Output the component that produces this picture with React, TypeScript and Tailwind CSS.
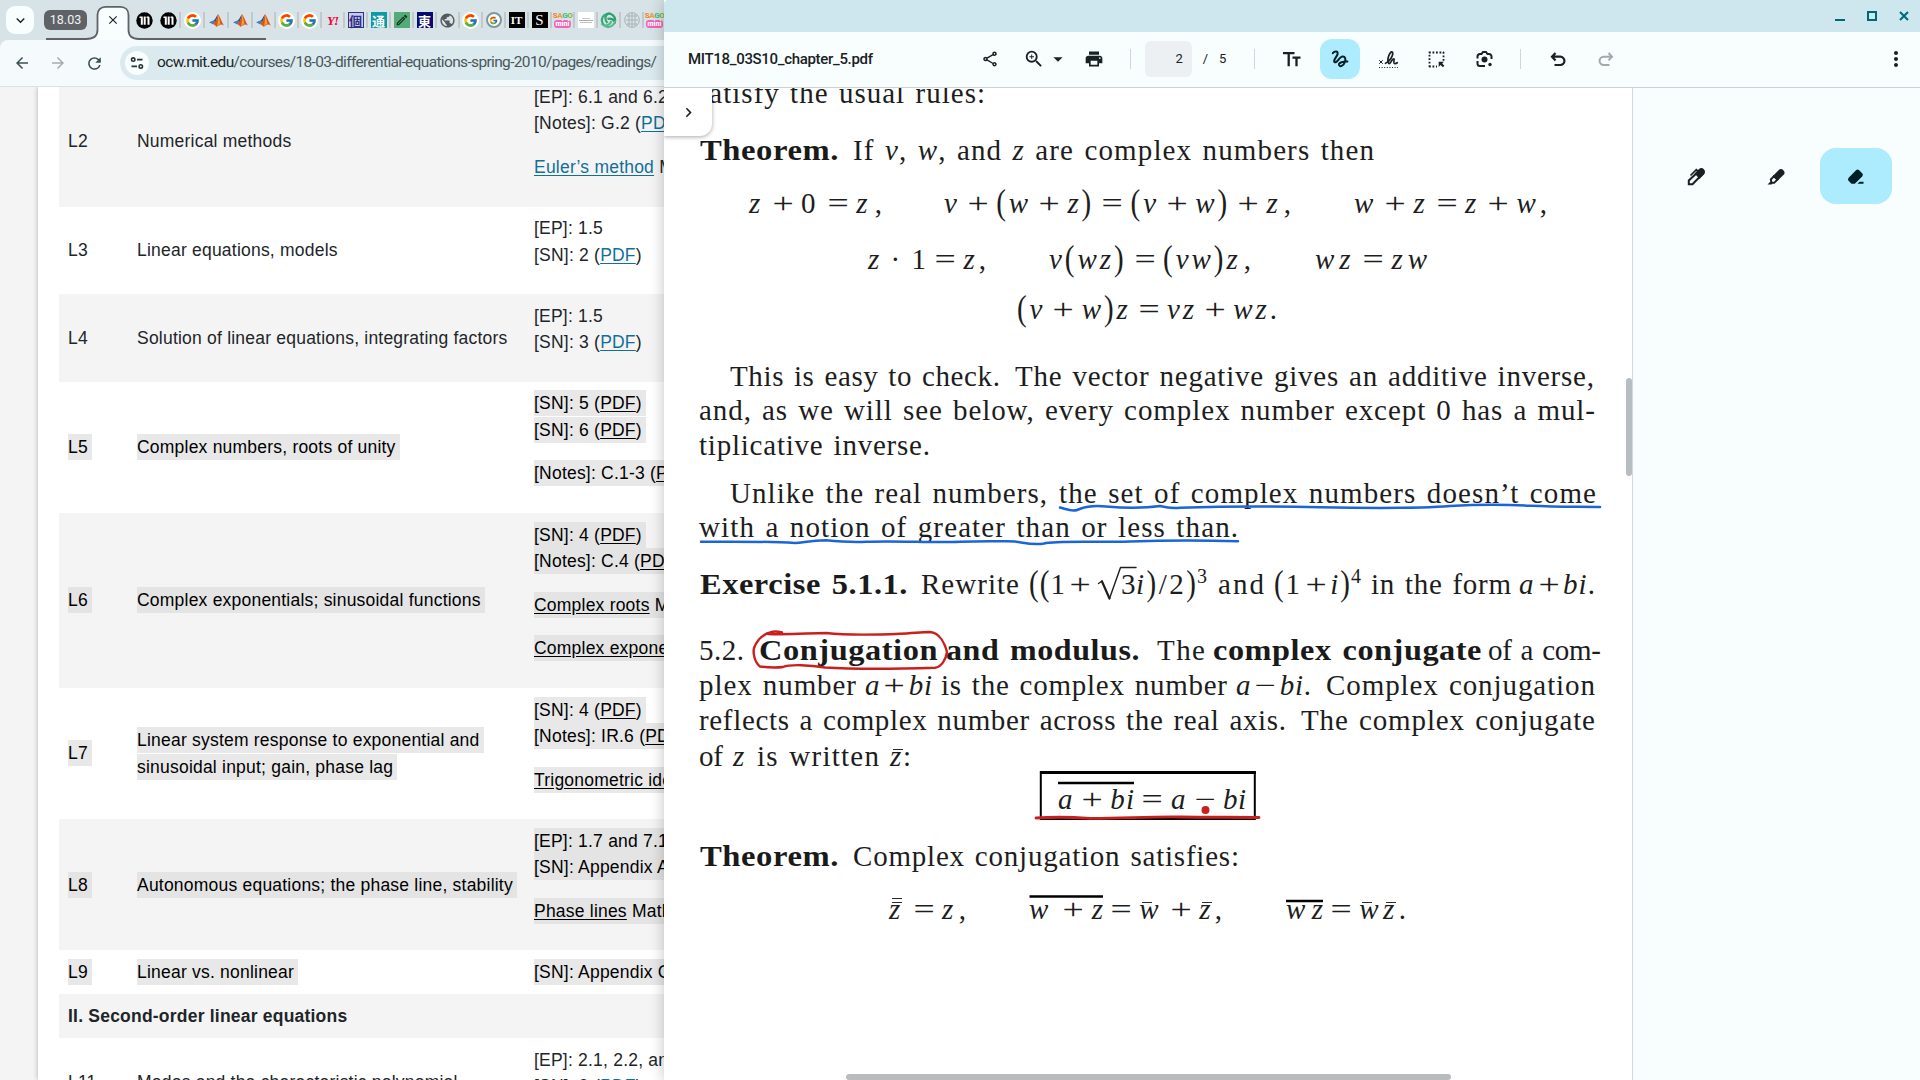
import React, { useLayoutEffect, useRef, type ReactNode } from 'react';
import {
  MdArrowBack,
  MdArrowDropDown,
  MdArrowForward,
  MdClose,
  MdKeyboardArrowDown,
  MdMoreVert,
  MdOutlineShare,
  MdPrint,
  MdPublic,
  MdRefresh,
  MdZoomIn,
  MdChevronRight,
  MdOutlineEdit,
} from 'react-icons/md';
import { FcGoogle } from 'react-icons/fc';

/* ---------- text that spreads its letters over a given width ---------- */

function Fit({
  w,
  stretch = false,
  className = '',
  children,
}: {
  w: number;
  stretch?: boolean;
  className?: string;
  children: ReactNode;
}) {
  const ref = useRef<HTMLSpanElement>(null);
  useLayoutEffect(() => {
    const el = ref.current;
    if (!el) return;
    const fit = () => {
      el.style.transform = 'none';
      if (stretch) {
        el.style.letterSpacing = '0.5px';
        el.style.transformOrigin = '0 0';
        el.style.transform = `scaleX(${w / el.getBoundingClientRect().width})`;
        return;
      }
      el.style.letterSpacing = '0px';
      const natural = el.getBoundingClientRect().width;
      el.style.letterSpacing = '1px';
      const slots = el.getBoundingClientRect().width - natural;
      el.style.letterSpacing = `${(w - natural) / Math.max(1, slots - 1)}px`;
    };
    fit();
    document.fonts?.ready.then(fit);
  }, [w, stretch]);
  return (
    <span ref={ref} className={`inline-block shrink-0 whitespace-pre ${className}`}>
      {children}
    </span>
  );
}

/* ---------- browser window ---------- */

function Google() {
  return (
    <span className="flex size-[17px] items-center justify-center rounded-full bg-white">
      <FcGoogle size={15} />
    </span>
  );
}

function MitMark() {
  return (
    <svg width="17" height="17" viewBox="0 0 17 17">
      <circle cx="8.5" cy="8.5" r="8.2" fill="#000" />
      <path d="M3.500 4.500h3.300v8.300H4.800V6H3.500ZM7.700 4.500h2v8.300h-2ZM10.600 4.500h1.700c.8 0 1.200.5 1.200 1.200v7.100h-2V6h-.9Z" fill="#fff" />
    </svg>
  );
}

function Matlab() {
  return (
    <svg width="17" height="17" viewBox="0 0 17 17">
      <path d="M1 10.2 5.4 8.4 7.6 10.3 4.8 12.2Z" fill="#3d7fc0" />
      <path d="M5.4 8.4C7 8 8 5 10 2.2 8.8 6 8.7 8.5 7.6 10.3Z" fill="#29557d" />
      <path d="M10 2C8.8 6 8.6 9 4.8 12.2 7 11.6 7.6 15 9.2 14.6 11 14 12 11 15.8 13.4 13.5 9 11.5 4 10 2Z" fill="#d9541e" />
      <path d="M10 2C10.4 6 9.6 11 9.2 14.6 11 14 11.2 12 12.4 11.6 11.6 8 10.8 4 10 2Z" fill="#f0a23a" />
    </svg>
  );
}

function Kanji({ ch, cls }: { ch: string; cls: string }) {
  return (
    <span
      className={`flex size-4 items-center justify-center font-['Noto_Sans_CJK_JP',sans-serif] text-[13px] leading-none font-bold ${cls}`}
    >
      {ch}
    </span>
  );
}

function Sago() {
  return (
    <span className="flex h-4 w-[17px] flex-col items-center font-['Roboto',sans-serif] text-[8px] leading-none font-black">
      <span className="flex h-2 tracking-[-0.5px]">
        <span className="text-[#f08a3c]">S</span>
        <span className="text-[#f0a03c]">A</span>
        <span className="text-[#4dbb9a]">G</span>
        <span className="text-[#7cc043]">O</span>
      </span>
      <span className="flex h-2 w-[17px] items-center justify-center rounded-[3px] bg-[#f565b5] text-[7px] text-white">mini</span>
    </span>
  );
}

function Swirl() {
  return (
    <svg width="17" height="17" viewBox="0 0 17 17" fill="none" strokeWidth="2.2">
      <path d="M4.500 13.500C0 10 1.500 3 7.500 2 4.500 5 4.800 8 7.500 11" stroke="#3aa878" />
      <path d="M6 2.200C11 .200 16 4 15 9.500 13 7 10 6 7.500 7" stroke="#2f9f6f" />
      <path d="M15 8.500C14.500 14 8.500 17 4 13.500 8 13.800 10.500 12 11.300 9" stroke="#56b98d" />
    </svg>
  );
}

function GreySeal() {
  return (
    <svg width="16" height="16" viewBox="0 0 16 16" fill="none" stroke="#a9b2b4">
      <circle cx="8" cy="8" r="7.3" />
      <path d="M8 1v14M3 4h10M2 8h12M3 12h10M5 2v12M11 2v12" />
    </svg>
  );
}

const favicons: { gap: string; icon: ReactNode }[] = [
  { gap: 'w-6', icon: <MitMark /> },
  { gap: 'w-6', icon: <MitMark /> },
  { gap: 'w-6', icon: <Google /> },
  { gap: 'w-6', icon: <Matlab /> },
  { gap: 'w-6', icon: <Matlab /> },
  { gap: 'w-[23px]', icon: <Matlab /> },
  { gap: 'w-[23px]', icon: <Google /> },
  { gap: 'w-[23px]', icon: <Google /> },
  {
    gap: 'w-[23px]',
    icon: <span className="font-['Liberation_Serif',serif] text-[13px] leading-none font-bold tracking-[-1px] text-[#f5003c] italic">Y!</span>,
  },
  { gap: 'w-[23px]', icon: <Kanji ch="個" cls="border border-[#2f2f86] bg-[#c9cbe6] text-[#2f2f86]" /> },
  { gap: 'w-[23px]', icon: <Kanji ch="通" cls="bg-[#0b9aa6] text-white" /> },
  {
    gap: 'w-[23px]',
    icon: (
      <span className="flex size-4 items-center justify-center bg-[#55ab78] text-[#16351f]">
        <MdOutlineEdit size={14} />
      </span>
    ),
  },
  { gap: 'w-[23px]', icon: <Kanji ch="東" cls="bg-[#0a0a6e] text-white" /> },
  { gap: 'w-[23px]', icon: <MdPublic size={17} className="text-[#54595c]" /> },
  { gap: 'w-[23px]', icon: <Google /> },
  {
    gap: 'w-[23px]',
    icon: (
      <span className="flex size-4 items-center justify-center rounded-full border-2 border-[#7f979e] bg-white">
        <FcGoogle size={9} />
      </span>
    ),
  },
  {
    gap: 'w-[23px]',
    icon: (
      <span className="flex size-4 items-center justify-center bg-black font-['Liberation_Serif',serif] text-[11px] leading-none font-bold text-white">IT</span>
    ),
  },
  {
    gap: 'w-[23px]',
    icon: (
      <span className="flex size-4 items-center justify-center bg-black font-['Liberation_Serif',serif] text-[15px] leading-none text-white">S</span>
    ),
  },
  { gap: 'w-[23px]', icon: <Sago /> },
  {
    gap: 'w-[23px]',
    icon: (
      <span className="flex size-4 flex-col items-center justify-center gap-px bg-white">
        <span className="h-px w-2 bg-[#c8c8c8]" />
        <span className="h-px w-3.5 bg-[#aaaaaa]" />
        <span className="h-px w-3 bg-[#c0c0c0]" />
      </span>
    ),
  },
  { gap: 'w-[23px]', icon: <Swirl /> },
  { gap: 'w-[23px]', icon: <GreySeal /> },
  { gap: 'w-[23px]', icon: <Sago /> },
];

function TabStrip() {
  return (
    <div className="relative flex h-10 shrink-0 items-start bg-[#d7e3e6]">
      <button className="mt-1.5 ml-1.5 flex size-7 shrink-0 items-center justify-center rounded-[9px] bg-[#f8fdfe] text-[#1b2325]">
        <MdKeyboardArrowDown size={17} />
      </button>
      <div className="mt-2.5 ml-2.5 flex h-5 w-[43px] shrink-0 items-center justify-center rounded-[6px] bg-[#5f6368] font-['Roboto',sans-serif] text-[12.5px] text-[#f1f4f5]">
        18.03
      </div>
      <svg className="absolute top-0 left-0" width="280" height="40" viewBox="0 0 280 40">
        <path d="M88 40c6-1 9.500-4 9.500-9V15c0-5 3-8 8-8h15c5 0 8 3 8 8v16c0 5 3 8 9 9Z" fill="#f8fdfe" />
        <path
          d="M46 39H86c8 0 11.500-3 11.500-9V15c0-5 3-8.200 8-8.200h15c5 0 8 3.200 8 8.200v15c0 6 3.500 9 10.500 9H266"
          fill="none"
          stroke="#5f6368"
          strokeWidth="1.800"
        />
      </svg>
      <div className="relative mt-3 ml-[18px] flex size-4 shrink-0 items-center justify-center text-[#1b2325]">
        <MdClose size={14} />
      </div>
      <div className="mt-2 ml-[11px] flex h-6 shrink-0 items-center">
        {favicons.map((f, i) => (
          <div key={i} className={`relative flex h-4 shrink-0 items-center justify-center ${f.gap}`}>
            {f.icon}
            {i > 0 && <span className="absolute top-0 -right-px h-4 w-0.5 bg-[#c3c9cb]" />}
          </div>
        ))}
      </div>
    </div>
  );
}

function BrowserToolbar() {
  return (
    <div className="shrink-0 bg-[#d7e3e6]">
      <div className="flex h-[47px] items-center overflow-hidden rounded-tl-lg border-b border-[#d6e3e8] bg-[#f5fbfd] text-[#3c4f54]">
        <MdArrowBack size={18} className="ml-[13px] shrink-0" />
        <MdArrowForward size={18} className="ml-[18px] shrink-0 text-[#a3adb0]" />
        <MdRefresh size={19} className="ml-[18px] shrink-0" />
        <div className="ml-4 flex h-[34px] w-[560px] shrink-0 items-center rounded-l-full bg-[#dbeaef] pl-[5px]">
          <span className="flex size-6 shrink-0 items-center justify-center rounded-full bg-[#f8fdfe]">
            <svg width="14" height="14" viewBox="0 0 14 14" fill="none" stroke="#2a3436" strokeWidth="1.600">
              <circle cx="3.200" cy="3.600" r="1.700" />
              <path d="M7 3.600h5.500M1.500 10.400H7" />
              <circle cx="10.800" cy="10.400" r="1.700" />
            </svg>
          </span>
          <Fit w={500} className="ml-2 font-['Roboto',sans-serif] text-[15.5px] text-[#4a565a]">
            <span className="text-[#1c2426]">ocw.mit.edu</span>/courses/18-03-differential-equations-spring-2010/pages/readings/
          </Fit>
        </div>
      </div>
    </div>
  );
}

type Piece = string | { a: string };
type Lesson = { id: string; title: string[]; refs: Piece[][][]; sel?: boolean; tail?: boolean };

const pdf: Piece = { a: 'PDF' };

const lessons: Lesson[] = [
  {
    id: 'L2',
    title: ['Numerical methods'],
    refs: [[['[EP]: 6.1 and 6.2'], ['[Notes]: G.2 (', pdf, ')']], [[{ a: 'Euler’s method' }, ' Mathlet']]],
    tail: true,
  },
  { id: 'L3', title: ['Linear equations, models'], refs: [[['[EP]: 1.5'], ['[SN]: 2 (', pdf, ')']]], tail: true },
  { id: 'L4', title: ['Solution of linear equations, integrating factors'], refs: [[['[EP]: 1.5'], ['[SN]: 3 (', pdf, ')']]], tail: true },
  {
    id: 'L5',
    title: ['Complex numbers, roots of unity'],
    refs: [[['[SN]: 5 (', pdf, ')'], ['[SN]: 6 (', pdf, ')']], [['[Notes]: C.1-3 (', pdf, ')']]],
    sel: true,
    tail: true,
  },
  {
    id: 'L6',
    title: ['Complex exponentials; sinusoidal functions'],
    refs: [
      [['[SN]: 4 (', pdf, ')'], ['[Notes]: C.4 (', pdf, ')']],
      [[{ a: 'Complex roots' }, ' Mathlet']],
      [[{ a: 'Complex exponential' }, ' Mathlet']],
    ],
    sel: true,
    tail: true,
  },
  {
    id: 'L7',
    title: ['Linear system response to exponential and', 'sinusoidal input; gain, phase lag'],
    refs: [[['[SN]: 4 (', pdf, ')'], ['[Notes]: IR.6 (', pdf, ')']], [[{ a: 'Trigonometric identity' }, ' Mathlet']]],
    sel: true,
    tail: true,
  },
  {
    id: 'L8',
    title: ['Autonomous equations; the phase line, stability'],
    refs: [[['[EP]: 1.7 and 7.1'], ['[SN]: Appendix A']], [[{ a: 'Phase lines' }, ' Mathlet']]],
    sel: true,
    tail: true,
  },
  { id: 'L9', title: ['Linear vs. nonlinear'], refs: [[['[SN]: Appendix C']]], sel: true },
];

const lastLesson: Lesson = {
  id: 'L11',
  title: ['Modes and the characteristic polynomial'],
  refs: [[['[EP]: 2.1, 2.2, and 2.3'], ['[SN]: 9 (', pdf, ')']]],
  tail: true,
};

function Mark({ on, striped, children }: { on?: boolean; striped: boolean; children: ReactNode }) {
  if (!on) return <span className="whitespace-nowrap">{children}</span>;
  return (
    <span className={`py-[3px] pr-1 whitespace-nowrap text-black ${striped ? 'bg-[#e4e4e4]' : 'bg-[#e8e8e8]'}`}>{children}</span>
  );
}

function LessonRow({ l, striped }: { l: Lesson; striped: boolean }) {
  return (
    <div className={`flex items-center py-[8.75px] ${striped ? 'bg-[#f4f4f4]' : 'bg-white'}`}>
      <div className="w-[78px] shrink-0 pl-[9px]">
        <Mark on={l.sel} striped={striped}>{l.id}</Mark>
      </div>
      <div className="w-[397px] shrink-0">
        {l.title.map((t) => (
          <div key={t}>
            <Mark on={l.sel} striped={striped}>{t}</Mark>
          </div>
        ))}
      </div>
      <div className={`flex w-[300px] shrink-0 flex-col gap-[17.5px] ${l.tail ? 'pb-[17.5px]' : ''}`}>
        {l.refs.map((p, i) => (
          <div key={i}>
            {p.map((line, j) => (
              <div key={j}>
                <Mark on={l.sel} striped={striped}>
                  {line.map((x, k) =>
                    typeof x === 'string' ? (
                      x
                    ) : (
                      <a key={k} className={`underline underline-offset-[1.5px] ${l.sel ? 'text-black' : 'text-[#126f9a]'}`}>
                        {x.a}
                      </a>
                    ),
                  )}
                </Mark>
              </div>
            ))}
          </div>
        ))}
      </div>
    </div>
  );
}

function BrowserWindow() {
  return (
    <div className="flex h-[1080px] w-[664px] shrink-0 flex-col overflow-hidden">
      <TabStrip />
      <BrowserToolbar />
      <div className="min-h-0 flex-1 overflow-hidden bg-[#f4f4f4] pl-[38px]">
        <div className="flow-root h-full bg-white pl-[21px] shadow-[0_0_5px_rgba(0,0,0,0.28)]">
          <div className="mt-[-11.6px] w-[900px] font-['Liberation_Sans',sans-serif] text-[17.5px] leading-[26.25px] tracking-[0.215px] text-[#212529]">
            {lessons.map((l, i) => (
              <LessonRow key={l.id} l={l} striped={i % 2 === 0} />
            ))}
            <div className="bg-[#f4f4f4] py-[8.75px] pl-[9px] font-bold">II. Second-order linear equations</div>
            <LessonRow l={lastLesson} striped={false} />
          </div>
        </div>
      </div>
    </div>
  );
}

/* ---------- document ---------- */

const V = ({ children }: { children: ReactNode }) => <i className="italic">{children}</i>;
/* Operators: displayed formulas, formulas within a line, and a lone sign. */
const Op = ({ children }: { children: ReactNode }) => <span className="mx-[10px] inline-block scale-x-[1.3] tracking-normal">{children}</span>;
const Oi = ({ children }: { children: ReactNode }) => <span className="mx-[6px] inline-block scale-x-[1.3] tracking-normal">{children}</span>;
const Sign = ({ children }: { children: ReactNode }) => <span className="mx-[3px] inline-block scale-x-[1.3] tracking-normal">{children}</span>;
const Paren = ({ children }: { children: ReactNode }) => (
  <span className="inline-block origin-[50%_62%] scale-y-[1.22]">{children}</span>
);
const Bar = ({ children }: { children: ReactNode }) => (
  <span className="relative">
    <i>{children}</i>
    <span className="absolute top-[9px] left-[3px] h-[1.5px] w-2.5 bg-[#2a2a2a]" />
  </span>
);
const BarBar = ({ children }: { children: ReactNode }) => (
  <span className="relative">
    <i>{children}</i>
    <span className="absolute top-[9px] left-[3px] h-[1.5px] w-2.5 bg-[#2a2a2a]" />
    <span className="absolute top-[5px] left-[3px] h-[1.5px] w-2.5 bg-[#2a2a2a]" />
  </span>
);

type Seg = { x: number; r: number; t: ReactNode; c?: string };
type Row = { y: number; s: Seg[] };

const bold = 'font-bold text-[#1a1a1a]';

const rows: Row[] = [
  { y: 103, s: [{ x: 697, r: 985, t: 'satisfy the usual rules:' }] },
  {
    y: 159.5,
    s: [
      { x: 700, r: 839, t: 'Theorem.', c: bold },
      { x: 853, r: 1374, t: <>If <V>v</V>, <V>w</V>, and <V>z</V> are complex numbers then</> },
    ],
  },
  {
    y: 212.5,
    s: [
      { x: 749, r: 882, t: <><V>z</V><Op>+</Op>0<Op>=</Op><V>z</V><span className="ml-[3px]">,</span></> },
      { x: 944, r: 1291, t: <><V>v</V><Op>+</Op><Paren>(</Paren><V>w</V><Op>+</Op><V>z</V><Paren>)</Paren><Op>=</Op><Paren>(</Paren><V>v</V><Op>+</Op><V>w</V><Paren>)</Paren><Op>+</Op><V>z</V><span className="ml-[3px]">,</span></> },
      { x: 1354, r: 1547, t: <><V>w</V><Op>+</Op><V>z</V><Op>=</Op><V>z</V><Op>+</Op><V>w</V>,</> },
    ],
  },
  {
    y: 268.7,
    s: [
      { x: 868, r: 986, t: <><V>z</V> · 1<Op>=</Op><V>z</V><span className="ml-[3px]">,</span></> },
      { x: 1049, r: 1251, t: <><V>v</V><Paren>(</Paren><V>wz</V><Paren>)</Paren><Op>=</Op><Paren>(</Paren><V>vw</V><Paren>)</Paren><V>z</V><span className="ml-[3px]">,</span></> },
      { x: 1315, r: 1427, t: <><V>wz</V><Op>=</Op><V>zw</V></> },
    ],
  },
  { y: 319.5, s: [{ x: 1017, r: 1277, t: <><Paren>(</Paren><V>v</V><Op>+</Op><V>w</V><Paren>)</Paren><V>z</V><Op>=</Op><V>vz</V><Op>+</Op><V>wz</V>.</> }] },
  {
    y: 385.7,
    s: [
      { x: 730, r: 1000, t: 'This is easy to check.' },
      { x: 1015, r: 1594, t: 'The vector negative gives an additive inverse,' },
    ],
  },
  { y: 420.4, s: [{ x: 699, r: 1595, t: 'and, as we will see below, every complex number except 0 has a mul-' }] },
  { y: 455.4, s: [{ x: 699, r: 930, t: 'tiplicative inverse.' }] },
  {
    y: 502.7,
    s: [
      { x: 730, r: 1047, t: 'Unlike the real numbers,' },
      { x: 1059, r: 1596, t: 'the set of complex numbers doesn’t come' },
    ],
  },
  { y: 537.4, s: [{ x: 699, r: 1238, t: 'with a notion of greater than or less than.' }] },
  {
    y: 594,
    s: [
      { x: 700, r: 908, t: 'Exercise 5.1.1.', c: bold },
      { x: 921, r: 1019, t: 'Rewrite' },
      { x: 1029, r: 1065, t: <><Paren>((</Paren>1</> },
      { x: 1069, r: 1094, t: <Sign>+</Sign> },
      { x: 1121, r: 1136, t: '3' },
      { x: 1136, r: 1196, t: <><V>i</V><Paren>)</Paren>/2<Paren>)</Paren></> },
      { x: 1197, r: 1208, t: '3', c: 'text-[20px] pb-[8px]' },
      { x: 1218, r: 1264, t: 'and' },
      { x: 1274, r: 1350, t: <><Paren>(</Paren>1<Oi>+</Oi><V>i</V><Paren>)</Paren></> },
      { x: 1351, r: 1361, t: '4', c: 'text-[20px] pb-[8px]' },
      { x: 1371, r: 1511, t: 'in the form' },
      { x: 1519, r: 1595, t: <><V>a</V><Oi>+</Oi><V>bi</V>.</> },
    ],
  },
  {
    y: 660,
    s: [
      { x: 699, r: 744, t: '5.2.' },
      { x: 759, r: 938, t: 'Conjugation', c: bold },
      { x: 946, r: 1140, t: 'and modulus.', c: bold },
      { x: 1157, r: 1205, t: 'The' },
      { x: 1213, r: 1482, t: 'complex conjugate', c: bold },
      { x: 1488, r: 1601, t: 'of a com-' },
    ],
  },
  {
    y: 694.7,
    s: [
      { x: 699, r: 856, t: 'plex number' },
      { x: 865, r: 932, t: <><V>a</V><Oi>+</Oi><V>bi</V></> },
      { x: 941, r: 1227, t: 'is the complex number' },
      { x: 1236, r: 1311, t: <><V>a</V><Oi>−</Oi><V>bi</V>.</> },
      { x: 1326, r: 1595, t: 'Complex conjugation' },
    ],
  },
  {
    y: 729.7,
    s: [
      { x: 699, r: 1286, t: 'reflects a complex number across the real axis.' },
      { x: 1301, r: 1595, t: 'The complex conjugate' },
    ],
  },
  {
    y: 765.7,
    s: [
      { x: 699, r: 723, t: 'of' },
      { x: 733, r: 746, t: <V>z</V> },
      { x: 757, r: 879, t: 'is written' },
      { x: 890, r: 911, t: <><Bar>z</Bar>:</> },
    ],
  },
  {
    y: 808.7,
    s: [
      { x: 1058, r: 1134, t: <><V>a</V><Op>+</Op><V>bi</V></> },
      { x: 1141, r: 1163, t: <Sign>=</Sign> },
      { x: 1171, r: 1187, t: <V>a</V> },
      { x: 1194, r: 1216, t: <Sign>−</Sign> },
      { x: 1223, r: 1246, t: <V>bi</V> },
    ],
  },
  {
    y: 866,
    s: [
      { x: 700, r: 839, t: 'Theorem.', c: bold },
      { x: 853, r: 1239, t: 'Complex conjugation satisfies:' },
    ],
  },
  {
    y: 919,
    s: [
      { x: 889, r: 966, t: <><BarBar>z</BarBar><Op>=</Op><V>z</V>,</> },
      { x: 1029, r: 1103, t: <><V>w</V><Op>+</Op><V>z</V></> },
      { x: 1103, r: 1222, t: <><Op>=</Op><Bar>w</Bar><Op>+</Op><Bar>z</Bar>,</> },
      { x: 1286, r: 1323, t: <V>wz</V> },
      { x: 1323, r: 1406, t: <><Op>=</Op><Bar>w</Bar><Bar>z</Bar>.</> },
    ],
  },
];

/* Distance from the baseline of the last line to the bottom of its box. */
const DESCENT = 5;

function PageText() {
  let prevY = 88 - DESCENT;
  return (
    <div className="font-['Liberation_Serif',serif] text-[29px] leading-[29px] [word-spacing:2px] text-[#1d1d1d]">
      {rows.map((row) => {
        const height = row.y - prevY;
        prevY = row.y;
        let edge = 664;
        return (
          <div key={row.y} className="flex items-end" style={{ height }}>
            {row.s.map((s) => {
              const gap = s.x - edge;
              edge = s.r;
              return (
                <span key={s.x} className="flex shrink-0" style={{ marginLeft: gap, width: s.r - s.x }}>
                  <Fit w={s.r - s.x} stretch={s.c === bold} className={s.c}>{s.t}</Fit>
                </span>
              );
            })}
          </div>
        );
      })}
    </div>
  );
}

/* Rules, the boxed formula, and the pen strokes made over the page. */
function Ink() {
  return (
    <svg className="pointer-events-none absolute top-0 left-0" width="968" height="992" viewBox="664 88 968 992" fill="none" strokeLinecap="round" strokeLinejoin="round">
      <path d="M1098.500 583.500l3.500-2.500" stroke="#1d1d1d" strokeWidth="1.300" />
      <path d="M1102 581.500l7.500 17" stroke="#1d1d1d" strokeWidth="2.200" />
      <path d="M1109.500 598.500L1120.500 567.500H1136" stroke="#1d1d1d" strokeWidth="1.400" />
      <rect x="1040.800" y="772" width="214" height="47" stroke="#000" strokeWidth="2" strokeLinejoin="miter" />
      <path d="M1040 772.800H1256" stroke="#000" strokeWidth="2.400" strokeLinecap="butt" />
      <g stroke="#000" strokeWidth="2.400" strokeLinecap="butt">
        <path d="M1058 783H1134M1029.500 896.500H1103M1286 901H1323" />
      </g>
      <g stroke="#1a66d9" strokeWidth="2.500">
        <path d="M1060 507.500C1066 509 1072 512 1077 510 1086 506 1096 505.500 1106 506.500 1124 508 1146 508 1160 506 1166 507.500 1172 508.500 1180 507.700 1220 506.500 1270 506 1320 507.300 1360 508 1420 508.500 1450 506 1474 504.500 1500 504 1530 505.700 1560 507 1580 506.500 1600 507" />
        <path d="M701 541.800C730 541.500 770 541.500 795 543 806 542 812 540.500 826 540.300 838 541.500 850 542.500 866 541.800 900 540.500 930 543 960 541.800 990 540.500 1005 541.500 1015 541.500 1025 543 1034 545.500 1044 543.500 1056 540.500 1090 542.500 1130 541.500 1170 540 1200 540 1238 541.300" />
      </g>
      <g stroke="#c9201d" strokeWidth="2.400">
        <path d="M782 632.500C776 631 771 631 768 634 790 635 810 633 826 633 840 634.500 870 635 900 633.700 912 633.500 920 632 930 632 940 633 945 644 947 652 946 660 941 667 935 667.800 900 668.800 850 669 825 667.500 810 665 790 664 783 667 775 668 764 667 760 666.500 754 662 753 652 754 648 757 640 762 634 772 632" />
        <path d="M1036 818C1050 817 1070 817 1090 818.300 1120 818.500 1150 816.500 1180 817 1210 817.500 1240 817 1259 817.500" strokeWidth="2.800" />
        <circle cx="1205.500" cy="810" r="2.800" fill="#c9201d" />
      </g>
    </svg>
  );
}

/* ---------- viewer window ---------- */

function Slot({ w, ml, children, className = '' }: { w: number; ml: number; children: ReactNode; className?: string }) {
  return (
    <div className={`flex shrink-0 items-center justify-center ${className}`} style={{ width: w, marginLeft: ml }}>
      {children}
    </div>
  );
}

function ViewerToolbar() {
  return (
    <div className="flex h-14 shrink-0 items-center border-b border-[#c8d3d6] bg-[#f8fdfe] pb-px font-['Roboto',sans-serif] text-[#1a2123]">
      <Fit w={185} className="ml-6 text-[15px] font-medium">MIT18_03S10_chapter_5.pdf</Fit>
      <Slot w={20} ml={107}><MdOutlineShare size={18} /></Slot>
      <Slot w={22} ml={23}><MdZoomIn size={22} /></Slot>
      <Slot w={22} ml={2}><MdArrowDropDown size={22} /></Slot>
      <Slot w={22} ml={14}><MdPrint size={20} /></Slot>
      <div className="ml-[25px] h-5 w-px shrink-0 bg-[#cdd6d9]" />
      <div className="ml-[14px] flex h-9 w-[47px] shrink-0 items-center justify-end rounded-md bg-[#ecf0f3] pr-[9px] text-[13px]">2</div>
      <span className="ml-[11px] text-[13px]">/</span>
      <span className="ml-[11px] text-[13px]">5</span>
      <div className="ml-[28px] h-5 w-px shrink-0 bg-[#cdd6d9]" />
      <Slot w={20} ml={27}>
        <svg width="18" height="16" viewBox="0 0 18 16" fill="none" stroke="currentColor" strokeWidth="2.300">
          <path d="M0 2.200H11.500M5.700 2.200V15.200M9.500 6.700H17.500M13.500 6.700V15.200" />
        </svg>
      </Slot>
      <Slot w={40} ml={18} className="h-10 rounded-xl bg-[#adebff] text-[#001f27]">
        <svg width="18" height="18" viewBox="0 0 18 18" fill="none" stroke="currentColor" strokeWidth="2" strokeLinecap="round" strokeLinejoin="round">
          <path d="M1.800 3.200C3.500 1 7.200.700 6.600 4 6 7 1.800 9.800 3.400 12 5.500 13.800 8 7.500 11 6.600 14.500 6 15 9.500 13.800 12.200 12.500 16 8.800 17.300 8 15 7.600 12.600 12 11.400 16.400 11.400" />
        </svg>
      </Slot>
      <Slot w={22} ml={17}>
        <svg width="21" height="19" viewBox="0 0 21 19" fill="none" stroke="currentColor" strokeWidth="1.700" strokeLinecap="round">
          <path d="M1.500 10.500l3 3M4.500 10.500l-3 3" strokeWidth="1" />
          <path d="M7.500 13.300C11.500 12 15.500 5.500 14.600 2.500 13.300.200 10.600 4.500 10 8.500 9.600 11.500 10.300 13.800 11.600 13.500 13.300 12.500 14 8.500 15.800 8.800 17 9.500 14.800 13 16.300 13.500 17.300 13.700 18.500 13.300 19.300 12.700" />
          <path d="M1 17.500H20" strokeWidth="1.200" strokeDasharray="1 1.600" strokeLinecap="butt" />
        </svg>
      </Slot>
      <Slot w={20} ml={27}>
        <svg width="17" height="17" viewBox="0 0 17 17" fill="none" stroke="currentColor" strokeWidth="1.800">
          <path d="M1.500 16V.500M1 1.500H16M15.500 1V10M1 15.500H9" strokeDasharray="1.800 1.700" />
          <path d="M10.700 10.700h5.300l-1.800 1.800 2.200 2.300-1.500 1.500-2.300-2.200-1.900 1.900Z" fill="currentColor" stroke="none" />
        </svg>
      </Slot>
      <Slot w={20} ml={28}>
        <svg width="17" height="18" viewBox="0 0 17 18" fill="none" stroke="currentColor" strokeWidth="2">
          <path d="M1.500 8.500V6.500a2.500 2.500 0 0 1 2.500-2.500h1.500L7 2h3l1.500 2H13a2.500 2.500 0 0 1 2.500 2.500V9M1.500 11v2.500A2.500 2.500 0 0 0 4 16h5" />
          <circle cx="8.500" cy="9.500" r="3" fill="currentColor" stroke="none" />
          <circle cx="14" cy="14.500" r="1.700" fill="currentColor" stroke="none" />
        </svg>
      </Slot>
      <div className="ml-[26px] h-5 w-px shrink-0 bg-[#cdd6d9]" />
      <Slot w={20} ml={27}>
        <svg width="16" height="15" viewBox="0 0 16 15" fill="none" stroke="currentColor" strokeWidth="2.200">
          <path d="M5.500 1 2 4.700l3.500 3.700M2.500 4.700h7.800a4 4 0 0 1 0 8.300H4.500" />
        </svg>
      </Slot>
      <Slot w={20} ml={28} className="text-[#a3a9ab]">
        <svg width="16" height="15" viewBox="0 0 16 15" fill="none" stroke="currentColor" strokeWidth="2">
          <path d="M10.500 1 14 4.700l-3.500 3.700M13.500 4.700H5.700a4 4 0 0 0 0 8.300H11.500" />
        </svg>
      </Slot>
      <div className="mr-3 ml-auto flex w-6 shrink-0 justify-center">
        <MdMoreVert size={24} />
      </div>
    </div>
  );
}

function SidePanel() {
  return (
    <div className="flex w-[288px] shrink-0 items-start border-l border-[#d0dadd] bg-[#f8fdfe] pt-[60px] text-[#1a2123]">
      <div className="ml-[27px] flex h-14 w-[72px] items-center justify-center pt-[2px]">
        <svg width="18" height="18" viewBox="0 0 18 18" fill="none" stroke="currentColor" strokeWidth="2">
          <path d="M1.800 16.200V12.500L12.500 2.500a2.200 2.200 0 0 1 3.200 3.200L5.500 16.200Z" />
          <path d="M9 5.500 12.500 2a2.600 2.600 0 0 1 3.700 3.700L12.500 9.500Z" fill="currentColor" />
          <path d="M3.500 7.500 9.300 1.700 11 3.200" strokeWidth="1.700" />
        </svg>
      </div>
      <div className="ml-2 flex h-14 w-[72px] items-center justify-center pt-[2px]">
        <svg width="18" height="18" viewBox="0 0 18 18" fill="none" stroke="currentColor" strokeWidth="1.900">
          <path d="M3.800 11.500 7 8.200 10.500 11.500 7.200 14.800H4.500Z" />
          <path d="M7 8.200 12.500 2.600a2 2 0 0 1 2.900 0l.600.600a2 2 0 0 1 0 2.900L10.500 11.500Z" fill="currentColor" />
          <path d="M.500 16.500 3.500 13.500 5.500 15.500 4.500 16.500Z" fill="currentColor" stroke="none" />
        </svg>
      </div>
      <div className="ml-2 flex h-14 w-[72px] items-center justify-center rounded-2xl bg-[#adebff] pt-[2px] text-[#001f27]">
        <svg width="18" height="18" viewBox="0 0 18 18" fill="currentColor">
          <path d="M1.700 9.700 9 2.200a2.300 2.300 0 0 1 3.200 0l3 3a2.300 2.300 0 0 1 0 3.200L7.800 15.800H4.500L1.700 13a2.300 2.300 0 0 1 0-3.300ZM10.500 15.800l2-2H16.500v2Z" />
        </svg>
      </div>
    </div>
  );
}

function ViewerWindow() {
  return (
    <div className="relative flex h-[1080px] w-[1256px] shrink-0 flex-col bg-white shadow-[0_0_14px_rgba(0,0,0,0.24)]">
      <div className="flex h-8 shrink-0 items-center justify-end rounded-tl-[4px] bg-[#cee6ed]">
        <svg width="88" height="16" viewBox="1832 8 88 16" fill="none" stroke="#00687b" strokeWidth="2">
          <path d="M1835 20H1845" />
          <rect x="1868" y="12" width="8" height="8" />
          <path d="M1900 12l8 8M1908 12l-8 8" />
        </svg>
      </div>
      <ViewerToolbar />
      <div className="flex min-h-0 flex-1">
        <div className="relative w-[968px] shrink-0 overflow-hidden bg-white">
          <PageText />
          <Ink />
          <button className="absolute top-0 left-0 flex h-12 w-12 items-center justify-center rounded-br-xl bg-white text-[#1a2123] shadow-[0_1px_4px_rgba(0,0,0,0.35)]">
            <MdChevronRight size={19} />
          </button>
          <div className="absolute top-[290px] right-0 h-[98px] w-[6px] rounded-full bg-[#b6bec1]" />
          <div className="absolute bottom-0 left-[182px] h-[6px] w-[605px] rounded-full bg-[#b9bcbd]" />
        </div>
        <SidePanel />
      </div>
    </div>
  );
}

export default function App() {
  return (
    <div className="flex h-[1080px] w-[1920px] overflow-hidden bg-white">
      <BrowserWindow />
      <ViewerWindow />
    </div>
  );
}
